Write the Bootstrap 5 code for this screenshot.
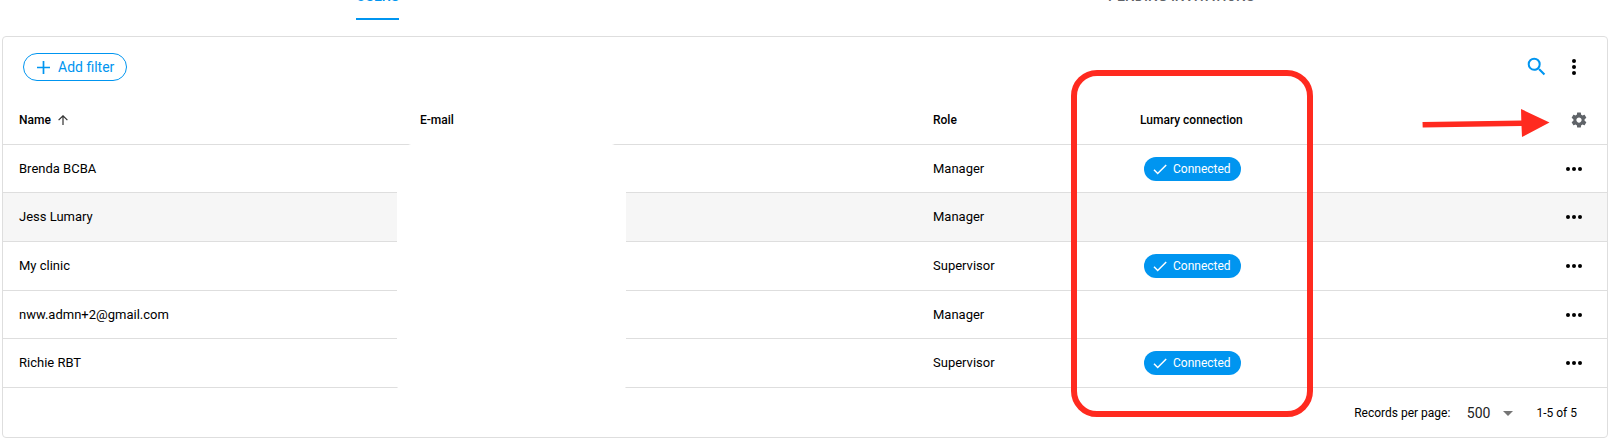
<!DOCTYPE html>
<html lang="en">
<head>
<meta charset="utf-8">
<title>Users</title>
<link href="https://cdn.jsdelivr.net/npm/bootstrap@5.3.0/dist/css/bootstrap.min.css" rel="stylesheet">
<style>
  body { font-family: Roboto, "Liberation Sans", sans-serif; color: #000; font-size: 13px; line-height: 20px; background: #fff; overflow: hidden; }
  .page { width: 1618px; height: 442px; }
  .tabs-bar { height: 36px; width: 1607px; margin-left: -24px; }
  .tab-item { height: 20px; margin-top: 0; }
  .tab-label { display: flex; height: 20px; font-size: 14px; font-weight: 500; line-height: 20px; color: #5f6368; }
  .tab-label > span { margin-top: -14px; }
  .tab-label.current { color: #0095f0; border-bottom: 2px solid #0095f0; }
  .panel { width: 1606px; height: 402px; margin-left: 2px; border: 1px solid #dedede; border-radius: 4px; background: #fff; }
  .toolbar { height: 59px; padding: 16px 27px 0 20px; }
  .filter-btn { width: 104px; height: 28px; border: 1px solid #0095f0; border-radius: 14px; color: #0095f0; font-size: 14px; line-height: 26px; padding: 0 0 0 13px; }
  .filter-btn span { margin: -1px 0 0 8px; }
  .grid-table { table-layout: fixed; width: 1604px; border-collapse: separate; border-spacing: 0; }
  .grid-table th, .grid-table td { padding: 0 0 0 16px; border-bottom: 1px solid #dedede; vertical-align: middle; white-space: nowrap; height: 49px; }
  .grid-table th { font-size: 12px; font-weight: 500; }
  .grid-table .short td { height: 48px; }
  .grid-table .hovered td { background: #f6f6f6; }
  .chip { width: 97px; height: 24px; margin-left: 4px; border-radius: 12px; background: #0095f0; color: #fff; font-size: 12px; padding-left: 9px; }
  .chip span { margin-left: 6px; }
  .pager { height: 49px; padding-right: 30px; font-size: 12px; }
  .pager .size { font-size: 14px; color: #222; margin-left: 16.5px; }
  .blank { left: 397px; top: 143px; width: 229px; height: 260px; border-radius: 20px; background: #fff; }
  .marker { left: 1071px; top: 70px; width: 242px; height: 347px; border: 6px solid #ff2a1f; border-radius: 26px; }
  .pointer { left: 1420px; top: 106px; }
  svg { display: block; flex: none; }
  .ico-search { margin: 2px 19px 0 0; }
  .ico-more { margin-top: 2px; }
  .ico-sort { margin-left: 7px; }
  .ico-gear { margin-right: 19px; }
  .ico-dots { margin-right: 25px; }
  .ico-caret { margin: 1px 23px 0 13px; }
</style>
</head>
<body>
<div class="page position-relative overflow-hidden">
  <nav class="tabs-bar d-flex">
    <div class="tab-item flex-fill w-50 d-flex justify-content-center"><div class="tab-label current"><span>USERS</span></div></div>
    <div class="tab-item flex-fill w-50 d-flex justify-content-center"><div class="tab-label"><span>PENDING INVITATIONS</span></div></div>
  </nav>
  <main class="panel">
    <div class="toolbar d-flex justify-content-between">
      <button class="filter-btn bg-transparent d-flex align-items-center">
        <svg width="13" height="13" viewBox="0 0 13 13"><path d="M6.500 0v13M0 6.500h13" stroke="#0095f0" stroke-width="1.700"/></svg>
        <span>Add filter</span>
      </button>
      <div class="d-flex align-items-start">
        <svg class="ico-search" width="24" height="24" viewBox="0 0 24 24"><path transform="translate(-.3 -.3)" fill="#0095f0" d="M15.500 14h-.79l-.28-.27A6.470 6.470 0 0 0 16 9.500 6.500 6.500 0 1 0 9.500 16c1.610 0 3.090-.59 4.230-1.570l.27.28v.79l5 4.990L20.490 19l-4.990-5zm-6 0C7.010 14 5 11.990 5 9.500S7.010 5 9.500 5 14 7.010 14 9.500 11.990 14 9.500 14z"/></svg>
        <svg class="ico-more" width="12" height="24" viewBox="0 0 12 24"><circle cx="6" cy="6" r="2"/><circle cx="6" cy="12" r="2"/><circle cx="6" cy="18" r="2"/></svg>
      </div>
    </div>
    <table class="grid-table">
      <colgroup><col style="width:401px"><col style="width:513px"><col style="width:207px"><col style="width:136px"><col></colgroup>
      <thead>
        <tr>
          <th><div class="d-flex align-items-center">Name<svg class="ico-sort" width="10" height="10" viewBox="0 0 10 10"><path d="M5 10V1M.6 5.200 5 .8l4.400 4.400" fill="none" stroke="#333" stroke-width="1.200"/></svg></div></th>
          <th>E-mail</th><th>Role</th><th>Lumary connection</th>
          <th><svg class="ico-gear ms-auto" width="18" height="18" viewBox="0 0 24 24"><path fill="#5f6368" d="M19.430 12.980c.04-.32.07-.64.07-.98s-.03-.66-.07-.98l2.110-1.650c.19-.15.24-.42.12-.64l-2-3.460c-.12-.22-.39-.3-.61-.22l-2.490 1c-.52-.4-1.080-.73-1.690-.98l-.38-2.650A.49.49 0 0 0 14 2h-4c-.25 0-.46.18-.49.42l-.38 2.650c-.61.25-1.170.59-1.690.98l-2.490-1c-.23-.09-.49 0-.61.22l-2 3.460c-.13.22-.07.49.12.64l2.110 1.650c-.04.32-.07.65-.07.98s.03.66.07.98l-2.110 1.650c-.19.15-.24.42-.12.64l2 3.460c.12.22.39.3.61.22l2.490-1c.52.4 1.080.73 1.690.98l.38 2.650c.03.24.24.42.49.42h4c.25 0 .46-.18.49-.42l.38-2.650c.61-.25 1.170-.59 1.690-.98l2.490 1c.23.09.49 0 .61-.22l2-3.460c.12-.22.07-.49-.12-.64l-2.110-1.650zM12 15.500c-1.930 0-3.500-1.570-3.500-3.500s1.570-3.500 3.500-3.500 3.500 1.570 3.500 3.500-1.570 3.500-3.500 3.500z"/></svg></th>
        </tr>
      </thead>
      <tbody id="rows"></tbody>
    </table>
    <footer class="pager d-flex align-items-center justify-content-end">
      <span>Records per page:</span>
      <span class="size">500</span>
      <svg class="ico-caret" width="10" height="5" viewBox="0 0 10 5"><path d="M0 0h10L5 5z" fill="#757575"/></svg>
      <span>1-5 of 5</span>
    </footer>
  </main>
  <div class="blank position-absolute"></div>
  <div class="marker position-absolute"></div>
  <svg class="pointer position-absolute" width="132" height="34" viewBox="0 0 132 34"><path d="M2.500 16 101.300 14.500 101 3 129.500 16.500 102 31 101.500 20 2.700 21.500z" fill="#ff2a1f"/></svg>
</div>
<script>
  const users = [
    ['Brenda BCBA', 'Manager', true, 'short'],
    ['Jess Lumary', 'Manager', false, 'hovered'],
    ['My clinic', 'Supervisor', true, ''],
    ['nww.admn+2@gmail.com', 'Manager', false, 'short'],
    ['Richie RBT', 'Supervisor', true, '']
  ];
  const chip = '<div class="chip d-flex align-items-center"><svg width="14" height="12" viewBox="0 0 14 12"><path d="M1 6.800 4.700 10.500 13.200 2" fill="none" stroke="#fff" stroke-width="1.500"/></svg><span>Connected</span></div>';
  const dots = '<svg class="ico-dots ms-auto" width="16" height="4" viewBox="0 0 16 4"><circle cx="2" cy="2" r="2"/><circle cx="8" cy="2" r="2"/><circle cx="14" cy="2" r="2"/></svg>';
  document.getElementById('rows').innerHTML = users.map(([name, role, on, cls]) =>
    `<tr class="${cls}"><td>${name}</td><td></td><td>${role}</td><td>${on ? chip : ''}</td><td>${dots}</td></tr>`).join('');
</script>
<script src="https://cdn.jsdelivr.net/npm/bootstrap@5.3.0/dist/js/bootstrap.bundle.min.js"></script>
</body>
</html>
